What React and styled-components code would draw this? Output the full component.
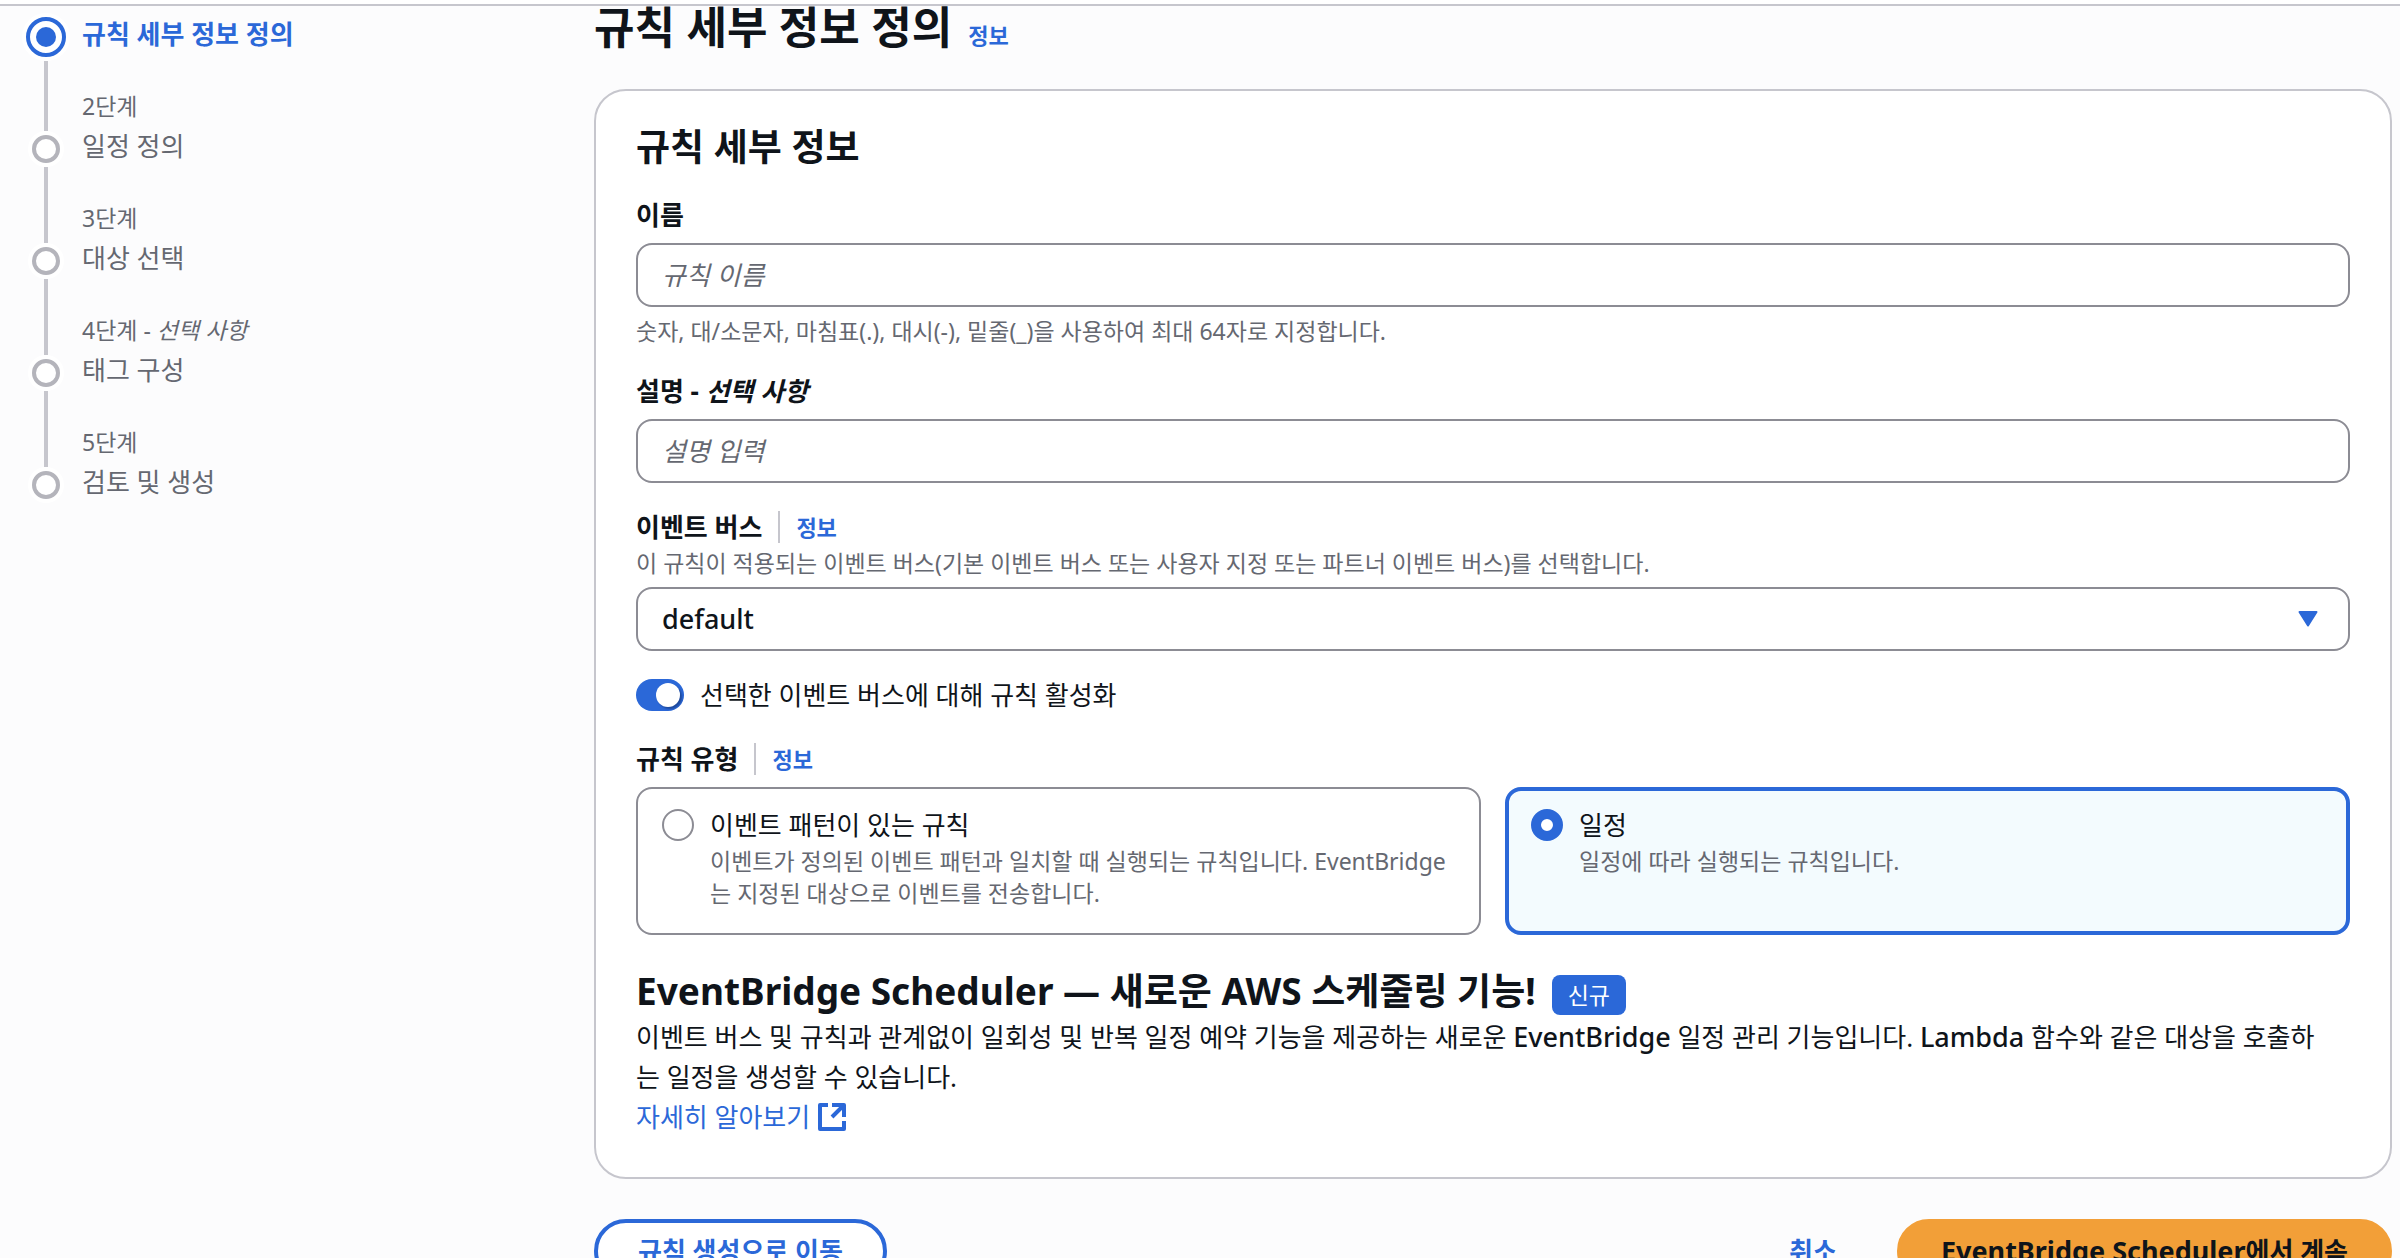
import React, { useState } from "react";
import styled, { createGlobalStyle, css } from "styled-components";

const color = {
  blue: "#2b68d8",
  text: "#0f141a",
  muted: "#656871",
  control: "#8c8c94",
  divider: "#c6c6cd",
  page: "#fcfcfd",
  orange: "#f29f38",
  tile: "#f3fbfe",
};

const GlobalStyle = createGlobalStyle`
  *, *::before, *::after { box-sizing: border-box; }
  html, body { margin: 0; height: 100%; overflow: hidden; }
  body {
    background: ${color.page};
    color: ${color.text};
    font-family: "Noto Sans", "Noto Sans CJK KR", sans-serif;
    font-size: 26px;
    line-height: 40px;
  }
  input, select, button { font: inherit; color: inherit; }
  h1, h2, p { margin: 0; }
`;

const Page = styled.div`
  height: 100vh;
  overflow: hidden;
  display: flex;
  flex-direction: column;
`;

const TopBar = styled.div`
  flex: none;
  height: 6px;
  background: #fff;
  border-bottom: 2px solid ${color.divider};
`;

const Layout = styled.div`
  flex: 1;
  min-height: 0;
  overflow: hidden;
  display: grid;
  grid-template-columns: 570px minmax(0, 1fr);
  padding: 0 8px 0 24px;
`;

const Steps = styled.ol`
  list-style: none;
  margin: 0;
  padding: 8px 0 0;
`;

const Step = styled.li`
  display: grid;
  grid-template-columns: 40px 1fr;
  column-gap: 18px;
`;

const Track = styled.div`
  display: flex;
  flex-direction: column;
  align-items: center;
  width: 44px;
`;

const Line = styled.span`
  width: 4px;
  background: ${color.divider};
  height: ${(p) => p.$height}px;
  flex: ${(p) => (p.$height ? "none" : 1)};
`;

const Dot = styled.span`
  flex: none;
  display: grid;
  place-items: center;
  width: ${(p) => (p.$active ? 40 : 28)}px;
  height: ${(p) => (p.$active ? 40 : 28)}px;
  margin: ${(p) => (p.$active ? "3px 0 4px" : "4px 0")};
  border: 4px solid ${(p) => (p.$active ? color.blue : "#b4b4bb")};
  border-radius: 50%;
  background: #fff;
  box-shadow: 0 0 0 4px #fff;
  ${(p) =>
    p.$active &&
    css`
      &::after {
        content: "";
        width: 20px;
        height: 20px;
        border-radius: 50%;
        background: ${color.blue};
      }
    `}
`;

const StepText = styled.div`
  display: flex;
  flex-direction: column;
  padding-bottom: ${(p) => (p.$last ? 0 : 32)}px;
`;

const StepLabel = styled.span`
  font-size: 23px;
  color: ${color.muted};
`;

const StepTitle = styled.span`
  color: ${(p) => (p.$active ? color.blue : color.muted)};
  font-weight: ${(p) => (p.$active ? 700 : 400)};
`;

const Main = styled.main`
  min-width: 0;
`;

const TitleRow = styled.div`
  display: flex;
  align-items: baseline;
  gap: 16px;
  height: 83px;
`;

const PageTitle = styled.h1`
  font-size: 44px;
  line-height: 42px;
`;

const InfoLink = styled.a`
  color: ${color.blue};
  font-size: 22px;
  font-weight: 700;
  line-height: 32px;
  text-decoration: none;
`;

const Card = styled.section`
  background: #fff;
  border: 2px solid ${color.divider};
  border-radius: 32px;
  padding: 32px 40px 40px;
`;

const Heading = styled.h2`
  font-size: 37px;
  line-height: 48px;
`;

const Fields = styled.div`
  display: flex;
  flex-direction: column;
  gap: 24px;
  padding-top: 24px;
`;

const Field = styled.div`
  display: flex;
  flex-direction: column;
`;

const LabelRow = styled.div`
  display: flex;
  align-items: center;
  margin-bottom: ${(p) => p.$gap || 0}px;
`;

const Label = styled.label`
  font-weight: 700;
`;

const InfoSlot = styled.span`
  display: flex;
  margin-left: 16px;
  padding-left: 16px;
  border-left: 2px solid ${color.divider};
`;

const Hint = styled.p`
  color: ${color.muted};
  font-size: 23px;
  line-height: 32px;
  input + & { margin-top: 8px; }
`;

const boxStyle = css`
  width: 100%;
  height: 64px;
  border: 2px solid ${color.control};
  border-radius: 16px;
  background: #fff;
  padding: 0 24px;
`;

const TextInput = styled.input`
  ${boxStyle}
  &::placeholder {
    color: ${color.muted};
    font-style: italic;
    opacity: 1;
  }
`;

const SelectWrap = styled.div`
  display: grid;
  align-items: center;
  margin-top: 8px;
  > * { grid-area: 1 / 1; }
  > svg { justify-self: end; margin-right: 32px; pointer-events: none; }
`;

const Select = styled.select`
  ${boxStyle}
  appearance: none;
  font-size: 27px;
  font-weight: 500;
`;

const SwitchLabel = styled.label`
  display: flex;
  align-items: center;
  gap: 16px;
`;

const Switch = styled.input`
  appearance: none;
  flex: none;
  display: flex;
  align-items: center;
  width: 48px;
  height: 32px;
  margin: 0;
  padding: 0 4px;
  border-radius: 16px;
  background: ${color.control};
  &::before {
    content: "";
    width: 24px;
    height: 24px;
    border-radius: 50%;
    background: #fff;
    box-shadow: 2px 2px 2px rgba(0, 7, 22, 0.3);
  }
  &:checked {
    background: ${color.blue};
    justify-content: flex-end;
  }
`;

const Tiles = styled.div`
  display: grid;
  grid-template-columns: 1fr 1fr;
  gap: 24px;
`;

const Tile = styled.label`
  display: flex;
  gap: 16px;
  min-height: 148px;
  padding: 16px 24px 24px;
  border: 2px solid ${color.control};
  border-radius: 16px;
  background: #fff;
  &:has(input:checked) {
    border: 4px solid ${color.blue};
    padding: 14px 22px 22px;
    background: ${color.tile};
  }
`;

const Radio = styled.input`
  appearance: none;
  flex: none;
  width: 32px;
  height: 32px;
  margin: 4px 0 0;
  border: 2px solid ${color.control};
  border-radius: 50%;
  background: #fff;
  &:checked { border: 10px solid ${color.blue}; }
`;

const TileText = styled.span`
  display: flex;
  flex-direction: column;
`;

const Promo = styled.div`
  padding-top: 32px;
`;

const PromoHead = styled.div`
  display: flex;
  align-items: center;
  gap: 16px;
  margin-bottom: 2px;
`;

const PromoText = styled.p`
  padding-right: 16px;
`;

const Badge = styled.span`
  margin-top: 8px;
  padding: 0 16px;
  border-radius: 8px;
  background: ${color.blue};
  color: #fff;
  font-size: 23px;
  line-height: 40px;
`;

const ExternalLink = styled.a`
  display: flex;
  align-items: center;
  width: fit-content;
  gap: 8px;
  color: ${color.blue};
  text-decoration: none;
`;

const Latin = styled.span`
  font-size: 27px;
  font-weight: ${(p) => (p.$bold ? 700 : 500)};
`;

const Actions = styled.div`
  display: flex;
  align-items: center;
  gap: 16px;
  padding-top: 40px;
`;

const Button = styled.button`
  flex: none;
  height: 64px;
  padding: 0 40px;
  border: 4px solid ${(p) => p.$border || "transparent"};
  border-radius: 32px;
  background: ${(p) => p.$fill || "transparent"};
  color: ${(p) => p.$color || color.blue};
  font-weight: 700;
  line-height: 40px;
  margin-right: ${(p) => (p.$start ? "auto" : 0)};
`;

const steps = [
  { title: "규칙 세부 정보 정의" },
  { label: "2단계", title: "일정 정의" },
  { label: "3단계", title: "대상 선택" },
  { label: "4단계", optional: true, title: "태그 구성" },
  { label: "5단계", title: "검토 및 생성" },
];

function StepNav() {
  return (
    <Steps>
      {steps.map((s, i) => (
        <Step key={s.title} aria-current={i === 0 ? "step" : undefined}>
          <Track>
            {i > 0 && <Line $height={45} />}
            <Dot $active={i === 0} />
            {i < steps.length - 1 && <Line />}
          </Track>
          <StepText $last={i === steps.length - 1}>
            {s.label && (
              <StepLabel>
                {s.label}
                {s.optional && <> - <em>선택 사항</em></>}
              </StepLabel>
            )}
            <StepTitle $active={i === 0}>{s.title}</StepTitle>
          </StepText>
        </Step>
      ))}
    </Steps>
  );
}

function Info() {
  return (
    <InfoSlot>
      <InfoLink href="#info">정보</InfoLink>
    </InfoSlot>
  );
}

export default function App() {
  const [enabled, setEnabled] = useState(true);
  const [type, setType] = useState("schedule");
  return (
    <>
      <GlobalStyle />
      <Page>
        <TopBar />
        <Layout>
          <StepNav />
          <Main>
            <TitleRow>
              <PageTitle>규칙 세부 정보 정의</PageTitle>
              <InfoLink href="#info">정보</InfoLink>
            </TitleRow>
            <Card>
              <Heading>규칙 세부 정보</Heading>
              <Fields>
                <Field>
                  <LabelRow $gap={8}>
                    <Label htmlFor="name">이름</Label>
                  </LabelRow>
                  <TextInput id="name" placeholder="규칙 이름" />
                  <Hint>숫자, 대/소문자, 마침표(.), 대시(-), 밑줄(_)을 사용하여 최대 64자로 지정합니다.</Hint>
                </Field>
                <Field>
                  <LabelRow $gap={8}>
                    <Label htmlFor="desc">설명 - <em>선택 사항</em></Label>
                  </LabelRow>
                  <TextInput id="desc" placeholder="설명 입력" />
                </Field>
                <Field>
                  <LabelRow>
                    <Label htmlFor="bus">이벤트 버스</Label>
                    <Info />
                  </LabelRow>
                  <Hint>이 규칙이 적용되는 이벤트 버스(기본 이벤트 버스 또는 사용자 지정 또는 파트너 이벤트 버스)를 선택합니다.</Hint>
                  <SelectWrap>
                    <Select id="bus" defaultValue="default">
                      <option value="default">default</option>
                    </Select>
                    <svg width="20" height="16" viewBox="0 0 20 16" aria-hidden="true">
                      <path d="M1.500 1h17L10 14.500z" fill={color.blue} stroke={color.blue} strokeWidth="2" strokeLinejoin="round" />
                    </svg>
                  </SelectWrap>
                </Field>
                <SwitchLabel>
                  <Switch type="checkbox" role="switch" checked={enabled} onChange={(e) => setEnabled(e.target.checked)} />
                  선택한 이벤트 버스에 대해 규칙 활성화
                </SwitchLabel>
                <Field role="radiogroup" aria-labelledby="type-label">
                  <LabelRow $gap={8}>
                    <Label as="span" id="type-label">규칙 유형</Label>
                    <Info />
                  </LabelRow>
                  <Tiles>
                    <Tile>
                      <Radio type="radio" name="type" checked={type === "pattern"} onChange={() => setType("pattern")} />
                      <TileText>
                        이벤트 패턴이 있는 규칙
                        <Hint as="span">이벤트가 정의된 이벤트 패턴과 일치할 때 실행되는 규칙입니다. EventBridge는 지정된 대상으로 이벤트를 전송합니다.</Hint>
                      </TileText>
                    </Tile>
                    <Tile>
                      <Radio type="radio" name="type" checked={type === "schedule"} onChange={() => setType("schedule")} />
                      <TileText>
                        일정
                        <Hint as="span">일정에 따라 실행되는 규칙입니다.</Hint>
                      </TileText>
                    </Tile>
                  </Tiles>
                </Field>
              </Fields>
              <Promo>
                <PromoHead>
                  <Heading>EventBridge Scheduler — 새로운 AWS 스케줄링 기능!</Heading>
                  <Badge>신규</Badge>
                </PromoHead>
                <PromoText>
                  이벤트 버스 및 규칙과 관계없이 일회성 및 반복 일정 예약 기능을 제공하는 새로운 <Latin>EventBridge</Latin> 일정 관리 기능입니다. <Latin>Lambda</Latin> 함수와 같은 대상을 호출하는 일정을 생성할 수 있습니다.
                </PromoText>
                <ExternalLink href="#learn">
                  자세히 알아보기
                  <svg width="28" height="28" viewBox="0 0 28 28" fill="none" stroke={color.blue} strokeWidth="4" aria-hidden="true">
                    <path d="M10 2H2v24h24v-8M14 2h12v12M26 2L14 14" strokeLinejoin="round" />
                  </svg>
                </ExternalLink>
              </Promo>
            </Card>
            <Actions>
              <Button type="button" $start $border={color.blue} $fill="#fff">규칙 생성으로 이동</Button>
              <Button type="button">취소</Button>
              <Button type="submit" $fill={color.orange} $border={color.orange} $color={color.text}>
                <Latin $bold>EventBridge Scheduler</Latin>에서 계속
              </Button>
            </Actions>
          </Main>
        </Layout>
      </Page>
    </>
  );
}
